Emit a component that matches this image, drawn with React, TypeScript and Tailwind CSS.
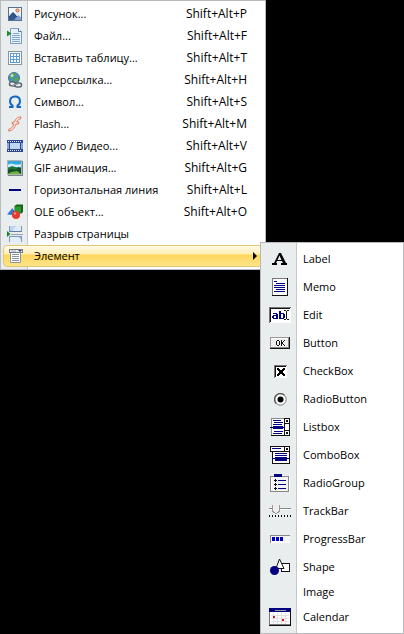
import type { ReactNode } from "react";

type MenuEntry = {
  label: string;
  icon?: ReactNode;
  shortcut?: string;
};

function Glyph({ w = 16, h = 16, smooth, children }: { w?: number; h?: number; smooth?: boolean; children: ReactNode }) {
  return (
    <svg
      width={w}
      height={h}
      viewBox={`0 0 ${w} ${h}`}
      shapeRendering={smooth ? "auto" : "crispEdges"}
      fill="none"
      aria-hidden="true"
    >
      {children}
    </svg>
  );
}

const NAVY = "#000080";

const insertItems: MenuEntry[] = [
  {
    label: "Рисунок...",
    shortcut: "Shift+Alt+P",
    icon: (
      <Glyph smooth>
        <rect x="1.5" y="1.5" width="13" height="13" fill="#e4eefa" stroke="#5b6f8e" />
        <rect x="2" y="2" width="12" height="5" fill="#f7fafd" />
        <path d="M2 14V11L6 6.5 10 10.5 11.5 9.5 14 12v2z" fill="#31588f" />
        <path d="M2 11 6 6.5l4 4.5" stroke="#1f3763" />
        <path d="M7 14l4-4.5 3 2.5v2z" fill="#7fa3d2" />
        <circle cx="10.5" cy="4.5" r="1.6" fill="#f6c9a4" stroke="#c45b2c" />
      </Glyph>
    ),
  },
  {
    label: "Файл...",
    shortcut: "Shift+Alt+F",
    icon: (
      <Glyph smooth>
        <path d="M3.5 .5h8l3 3v12h-11z" fill="#e6f0fb" stroke="#7d9cc6" />
        <path d="M11.5 .5v3h3" fill="#fff" stroke="#4f79b4" />
        <path d="M6 5.5h6M5 7.5h8M5 9.5h8M5 11.5h8M5 13.5h8" stroke="#86a8d4" />
        <path d="M0 2.5l4.5 3L0 8.5z" fill="#1c8a2f" />
      </Glyph>
    ),
  },
  {
    label: "Вставить таблицу...",
    shortcut: "Shift+Alt+T",
    icon: (
      <Glyph>
        <rect x="1.5" y="1.5" width="13" height="13" fill="#fff" stroke="#8a949f" />
        <rect x="3" y="3" width="10" height="10" fill="#5c9bdc" />
        <path d="M4 4h2v2H4zM7 4h2v2H7zM10 4h2v2h-2zM4 7h2v2H4zM7 7h2v2H7zM10 7h2v2h-2zM4 10h2v2H4zM7 10h2v2H7zM10 10h2v2h-2z" fill="#fff" />
      </Glyph>
    ),
  },
  {
    label: "Гиперссылка...",
    shortcut: "Shift+Alt+H",
    icon: (
      <Glyph smooth>
        <circle cx="7" cy="6" r="5.5" fill="#4b90ba" stroke="#47758f" />
        <path d="M4 2.5C6 0 9 1 9.5 3L7 4 6 7 3 6zM8 6l3-1 1 2-3 3-2-1z" fill="#5da64c" />
        <circle cx="5" cy="3.5" r="1.5" fill="#bde2d2" />
        <rect x="2.500" y="10" width="6.5" height="4" rx="2" fill="#e9edee" stroke="#5c6872" strokeWidth="1.5" transform="rotate(8 6 12)" />
        <rect x="8" y="11" width="6.5" height="4" rx="2" fill="#e9edee" stroke="#5c6872" strokeWidth="1.5" />
        <path d="M6 12.5h5" stroke="#9aa5ae" />
      </Glyph>
    ),
  },
  {
    label: "Символ...",
    shortcut: "Shift+Alt+S",
    icon: (
      <Glyph smooth>
        <path
          d="M2 13h3.5v-1.5C3.500 10.300 3 8.800 3 7.200 3 4.400 5 2.500 8 2.500s5 1.900 5 4.700c0 1.600-.5 3.100-2.500 4.300V13H14"
          stroke="#1466c4"
          strokeWidth="2"
        />
      </Glyph>
    ),
  },
  {
    label: "Flash...",
    shortcut: "Shift+Alt+M",
    icon: (
      <Glyph smooth>
        <path
          d="M14 1c-4-.3-5.500 2-6.500 5H5.500L5 8h2c-1 3-2.500 4.500-5 5l-.5 2C5.500 15 7.500 12 9 8h2.500l.5-2H9.700c.8-2 2-3 3.800-3z"
          fill="#fbeae4"
          stroke="#e27a60"
        />
      </Glyph>
    ),
  },
  {
    label: "Аудио / Видео...",
    shortcut: "Shift+Alt+V",
    icon: (
      <Glyph>
        <rect y="2" width="16" height="12" fill="#2d4596" />
        <rect y="5" width="16" height="6" fill="#86a9dc" />
        <rect x="3" y="5" width="10" height="6" fill="#bcd6f3" />
        <path d="M2.500 5v6M13.500 5v6" stroke="#2d4596" />
        <path d="M1 3.500h14M1 12.500h14" stroke="#e5edf9" strokeDasharray="1 1" />
      </Glyph>
    ),
  },
  {
    label: "GIF анимация...",
    shortcut: "Shift+Alt+G",
    icon: (
      <Glyph smooth>
        <rect x="1" y="1" width="15" height="15" fill="#7e8684" />
        <rect width="15" height="15" fill="#aeb6b4" />
        <rect x="1" y="1" width="13" height="13" fill="#36a6dd" />
        <path d="M1 5c3-3 7 1 13-1v3H1z" fill="#c8eef7" />
        <path d="M1 8l4-2 9 3v5H1z" fill="#23733a" />
        <path d="M1 10l5-1 3 1 2-3 3 1v6H1z" fill="#124f2b" />
        <path d="M1 14c3-3 6-2 9-3l4 3z" fill="#6db53c" />
      </Glyph>
    ),
  },
  {
    label: "Горизонтальная линия",
    shortcut: "Shift+Alt+L",
    icon: (
      <Glyph>
        <rect x="2" y="7" width="12" height="2" fill={NAVY} />
      </Glyph>
    ),
  },
  {
    label: "OLE объект...",
    shortcut: "Shift+Alt+O",
    icon: (
      <Glyph smooth>
        <path d="M7.500 2l2-1.500H16V8l-1.500 1.500h-7z" fill="#126417" />
        <rect x="8" y="2.500" width="6" height="6" fill="#2c9a2e" />
        <path d="M0 10.500L5.500 4v7z" fill="#2d78d2" />
        <path d="M5.500 4L8 9l-2.500 2z" fill="#163f87" />
        <circle cx="9" cy="11" r="4" fill="#e23a30" />
        <circle cx="8" cy="9.500" r="1.300" fill="#f58b7c" />
      </Glyph>
    ),
  },
  {
    label: "Разрыв страницы",
    icon: (
      <Glyph>
        <rect x="2" width="13" height="6" fill="#bdd4ee" />
        <path d="M9 0h6v6H5z" fill="#dfebf8" />
        <path d="M2.500 0v6M14.500 0v6" stroke="#7d98bd" />
        <path d="M2 5.500h13" stroke="#5f7fa8" />
        <path d="M2.500 16v-5.500h12V16" fill="#e4eefa" stroke="#7d98bd" />
        <path d="M11 11h3v3z" fill="#9dbbe0" />
        <path d="M4 8h12" stroke="#9aa5b1" />
        <path d="M0 5l3.500 3L0 11z" fill="#207c32" shapeRendering="auto" />
      </Glyph>
    ),
  },
];

const controlItems: MenuEntry[] = [
  {
    label: "Label",
    icon: (
      <Glyph>
        <path d="M7 2h2l5 10h1v2H9v-2h2l-1-2H5l-1 2h1v2H0v-2h2zM7.500 4.500L5.500 9h4z" fill="#000" fillRule="evenodd" shapeRendering="auto" />
      </Glyph>
    ),
  },
  {
    label: "Memo",
    icon: (
      <Glyph w={16} h={18}>
        <rect x=".5" y=".5" width="15" height="17" fill="#fff" stroke="#777" />
        <path d="M15.500 0v17.500H0" stroke="#111" />
        <path d="M2 3.500h3M4 5.500h9M2 7.500h11M2 9.500h11M4 11.500h9M2 13.500h11" stroke={NAVY} />
      </Glyph>
    ),
  },
  {
    label: "Edit",
    icon: (
      <Glyph w={22} h={16}>
        <rect width="22" height="16" fill="#fff" />
        <path d="M0 15.500V.5h22" stroke="#777" />
        <path d="M1.500 15V1.500H21" stroke="#111" />
        <path
          d="M4 6h4v1h1v5H4v-1H3V9h1V8h3V7H4zM5 9h2v2H5zM10 4h2v2h3v1h1v4h-1v1h-5zM12 7h2v4h-2z"
          fill={NAVY}
          fillRule="evenodd"
        />
        <path d="M15 3.500h2M18 3.500h2M17.500 4v8M15 12.500h2M18 12.500h2" stroke="#111" />
      </Glyph>
    ),
  },
  {
    label: "Button",
    icon: (
      <Glyph w={20} h={12}>
        <rect width="20" height="12" fill="#eee" />
        <path d="M0 11.500V.5h19" stroke="#999" />
        <path d="M1 1.500h17" stroke="#fff" />
        <path d="M19.500 0v11.500H0" stroke="#111" />
        <path d="M18.500 1v9.500H1" stroke="#888" />
        <path d="M7 3h2v1H7zM6 4h1v4H6zM9 4h1v4H9zM7 8h2v1H7zM11 3h1v6h-1zM12 5h1v2h-1zM13 4h1v1h-1zM14 3h1v1h-1zM13 7h1v1h-1zM14 8h1v1h-1z" fill="#111" />
      </Glyph>
    ),
  },
  {
    label: "CheckBox",
    icon: (
      <Glyph w={13} h={13}>
        <rect width="13" height="13" fill="#fff" />
        <path d="M.5 13V.5H13" stroke="#777" />
        <path d="M1.500 12V1.500H12" stroke="#111" />
        <path d="M3 3h2v1h1v1h2V4h1V3h2v2h-1v1H9v2h1v1h1v2H9v-1H8V9H6v1H5v1H3V9h1V8h1V6H4V5H3z" fill="#000" />
      </Glyph>
    ),
  },
  {
    label: "RadioButton",
    icon: (
      <Glyph w={13} h={13} smooth>
        <circle cx="6.500" cy="6.500" r="5.500" fill="#fff" stroke="#ddd" />
        <path d="M2.300 10.500A5.500 5.500 0 0 1 10.500 2.300" stroke="#555" strokeWidth="1.500" />
        <path d="M2.300 10.500A5.500 5.500 0 0 0 10.500 2.300" stroke="#888" />
        <circle cx="6.500" cy="6.500" r="3" fill="#000" />
      </Glyph>
    ),
  },
  {
    label: "Listbox",
    icon: (
      <Glyph w={20} h={18}>
        <rect x="1.500" y=".5" width="18" height="17" fill="#fff" stroke="#111" />
        <path d="M1.500 17V.5H14" stroke="#888" />
        <path d="M14.500 0v18M15 5.500h5M15 12.500h5" stroke="#111" />
        <path d="M16 2h2v2h-2zM16 14h2v2h-2z" fill="#111" />
        <path d="M3 2.500h8M4 4.500h9M3 6.500h9M4 13.500h9M3 15.500h9" stroke={NAVY} />
        <path d="M0 9h3V8h10v1h2v1h-2v1H3v-1H0z" fill={NAVY} />
      </Glyph>
    ),
  },
  {
    label: "ComboBox",
    icon: (
      <Glyph w={20} h={18}>
        <rect x=".5" y=".5" width="19" height="5" fill="#fff" stroke="#111" />
        <rect x="2.500" y="5.500" width="17" height="12" fill="#fff" stroke="#111" />
        <path d="M14.500 0v6" stroke="#111" />
        <path d="M2 2.500h9M5 7.500h12M5 9.500h12M5 14.500h12" stroke={NAVY} />
        <path d="M16 2h2v2h-2z" fill="#111" />
        <path d="M2 12h3v-1h12v1h3v1h-3v1H5v-1H2z" fill={NAVY} />
      </Glyph>
    ),
  },
  {
    label: "RadioGroup",
    icon: (
      <Glyph w={20} h={18}>
        <rect x="1.500" y="2.500" width="17" height="15" fill="#f3f4f5" />
        <path d="M.5 17.500v-15H4M12 2.500h6.500v15H.5" stroke="#888" />
        <path d="M1.500 16.500v-13H4M19.500 3v15H1" stroke="#fff" />
        <rect x="4" y="0" width="8" height="3" fill={NAVY} />
        <path d="M8 6.500h8M8 10.500h8M8 14.500h8" stroke={NAVY} />
        <path d="M4 6h3v1H4zM5 5h1v3H5zM4 10h3v1H4zM5 9h1v3H5zM4 14h3v1H4zM5 13h1v3H5z" fill="#111" />
      </Glyph>
    ),
  },
  {
    label: "TrackBar",
    icon: (
      <Glyph w={22} h={12}>
        <path d="M0 3.500h22" stroke="#888" />
        <path d="M0 4.500h22" stroke="#fff" />
        <path d="M3.500 0v6l3.500 3 3.500-3V0z" fill="#eee" />
        <path d="M3.500 0v6L7 9l3.500-3V0" stroke="#999" />
        <path d="M0 11h22" stroke="#111" strokeWidth="2" strokeDasharray="1 2" />
      </Glyph>
    ),
  },
  {
    label: "ProgressBar",
    icon: (
      <Glyph w={20} h={8}>
        <rect width="20" height="8" fill="#f4f5f6" />
        <path d="M0 7.500h20" stroke="#fff" />
        <path d="M.5 8V.5H20" stroke="#888" />
        <path d="M2 2h3v4H2zM6 2h3v4H6zM10 2h3v4h-3z" fill="#0000c0" />
      </Glyph>
    ),
  },
  {
    label: "Shape",
    icon: (
      <Glyph w={20} h={18}>
        <rect x="11.500" y="5.500" width="8" height="8" fill="#fff" stroke="#111" />
        <path d="M9.500 1L14 10.500H6z" fill="#fff" stroke="#111" shapeRendering="auto" />
        <circle cx="4.500" cy="12.500" r="4.500" fill={NAVY} shapeRendering="auto" />
      </Glyph>
    ),
  },
  { label: "Image" },
  {
    label: "Calendar",
    icon: (
      <Glyph w={22} h={18}>
        <rect x=".5" y=".5" width="21" height="16" fill="#fff" stroke="#777" />
        <rect width="22" height="4" fill={NAVY} />
        <path d="M6 2.500h11" stroke="#99a" />
        <path d="M2 7.500h18M2 10.500h18M2 13.500h18M4.500 5v11M8.500 5v11M12.500 5v11M16.500 5v11" stroke="#e2e2e2" />
        <path d="M21.500 1v16.500H0" stroke="#111" />
        <path d="M4 8h2v2H4zM13 11h2v2h-2z" fill="#d01818" />
      </Glyph>
    ),
  },
];

const elementIcon = (
  <Glyph smooth>
    <rect x="2" y="2" width="11" height="13" fill="#fff" />
    <path d="M2.500 4v10.500h10V4" stroke="#8b93a0" />
    <rect x="1.500" y="1.500" width="13" height="3" fill="#edf1f6" stroke="#717b8a" />
    <path d="M10 2h4l-2 2z" fill="#26477f" />
    <path d="M3 3h5" stroke="#9eabb9" />
    <path d="M4 6.500h7M4 8.500h7M4 10.500h7M4 12.500h7" stroke="#8795ab" />
  </Glyph>
);

function ControlsMenu() {
  return (
    <ul
      role="menu"
      aria-label="Элемент"
      className="absolute -top-[3px] left-[257px] z-10 w-36 border border-[#b8babb] bg-[linear-gradient(to_right,#e9edee_35px,#c5c7c8_35px,#c5c7c8_36px,#fff_36px)] py-[2px]"
    >
      {controlItems.map((item) => (
        <li key={item.label} role="none">
          <button
            type="button"
            role="menuitem"
            className={`flex w-full items-center text-left ${item.icon ? "h-7" : "h-[22px]"}`}
          >
            <span className="flex w-[38px] shrink-0 justify-center">{item.icon}</span>
            <span className="pl-1">{item.label}</span>
          </button>
        </li>
      ))}
    </ul>
  );
}

export default function App() {
  return (
    <div className="min-h-screen bg-black font-['Open_Sans','Noto_Sans',sans-serif] text-[11px] leading-4 text-black">
      <ul
        role="menu"
        aria-label="Вставка"
        className="w-[266px] border border-[#b8babb] bg-[linear-gradient(to_right,#e9edee_26px,#c5c7c8_26px,#c5c7c8_27px,#fff_27px)] p-[2px]"
      >
        {insertItems.map((item) => (
          <li key={item.label} role="none">
            <button type="button" role="menuitem" className="flex h-[22px] w-full items-center pr-4 text-left whitespace-nowrap">
              <span className="flex w-6 shrink-0 justify-center">{item.icon}</span>
              <span className="pl-[7px]">{item.label}</span>
              {item.shortcut && <span className="ml-auto text-[12px]">{item.shortcut}</span>}
            </button>
          </li>
        ))}
        <li role="none" className="relative">
          <button
            type="button"
            role="menuitem"
            aria-haspopup="menu"
            aria-expanded="true"
            className="flex h-[22px] w-full items-center rounded-sm border border-[#e3c673] bg-[linear-gradient(#fffbe9,#fdeeb3_40%,#fdd65a_45%,#fee48a)] text-left"
          >
            <span className="flex w-6 shrink-0 justify-center">{elementIcon}</span>
            <span className="pl-[6px]">Элемент</span>
            <svg width="4" height="8" viewBox="0 0 4 8" className="mr-[5px] ml-auto" aria-hidden="true">
              <path d="M0 0l4 4-4 4z" fill="#000" />
            </svg>
          </button>
          <ControlsMenu />
        </li>
      </ul>
    </div>
  );
}
